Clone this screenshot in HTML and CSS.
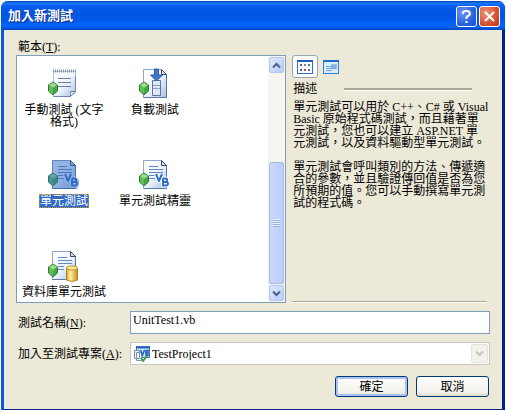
FILE: index.html
```html
<!DOCTYPE html>
<html lang="zh-Hant">
<head>
    <meta charset="UTF-8">
    <meta name="viewport" content="width=device-width, initial-scale=1.0">
    <title>加入新測試</title>
    <link rel="stylesheet" href="styles.css">
</head>
<body>
    <!-- Shared icon parts -->
    <svg class="defs" width="0" height="0" aria-hidden="true">
        <defs>
            <linearGradient id="paper" x1="0" y1="0" x2="1" y2="1">
                <stop offset="0" stop-color="#ffffff"/>
                <stop offset="0.5" stop-color="#f1f6fd"/>
                <stop offset="1" stop-color="#a9bfe3"/>
            </linearGradient>
            <linearGradient id="gold" x1="0" y1="0" x2="1" y2="0">
                <stop offset="0" stop-color="#d9a02c"/>
                <stop offset="0.35" stop-color="#fff0a8"/>
                <stop offset="1" stop-color="#c98f1e"/>
            </linearGradient>
            <g id="gem">
                <path d="M5 14l4.500 3v6L5 27l-4.500-4v-6z" fill="#45a447" stroke="#2b7b35"/>
                <path d="M5 14.500l4 2.500-4 3-4-3z" fill="#9bdc86"/>
                <path d="M1 17l4 3v6.500l-4-3.500z" fill="#62bd58"/>
            </g>
            <g id="page">
                <path d="M4.500 1.500H22l5.500 5v23h-23z" fill="url(#paper)" stroke="#8fa6cd"/>
                <path d="M27.500 6.500v23h-23" fill="none" stroke="#5c77a9"/>
                <path d="M22.500 1.500v5h5z" fill="#d5e0f2" stroke="#34486f"/>
            </g>
            <g id="lines" fill="none" stroke="#6188c6">
                <path d="M10 7.500h9M10 10.500h14M10 13.500h14M10 16.500h6M10 19.500h6"/>
            </g>
            <g id="vb" fill="none" stroke-linejoin="round">
                <path d="M17 15l3 7 3-7M24 19.500v7h3a2 1.800 0 0 0 0-3.600h-3m2.500 0a1.600 1.700 0 0 0 0-3.400H24" stroke="#ffffff" stroke-width="4"/>
                <path d="M17 15l3 7 3-7M24 19.500v7h3a2 1.800 0 0 0 0-3.600h-3m2.500 0a1.600 1.700 0 0 0 0-3.400H24" stroke="#2d6fc4" stroke-width="2"/>
            </g>
        </defs>
    </svg>

    <div class="window">
        <div class="title-bar">
            <h1>加入新測試</h1>
            <button class="caption-button help" aria-label="說明">
                <svg width="19" height="19" viewBox="0 0 19 19"><path d="M6 7V5.500Q6.500 4 9.500 4T13 6.500Q13 8 11 9T9.500 12M9.500 14v2" fill="none" stroke="#fff" stroke-width="2"/></svg>
            </button>
            <button class="caption-button close" aria-label="關閉">
                <svg width="19" height="19" viewBox="0 0 19 19"><path d="M5 5l9 9M14 5l-9 9" stroke="#fff" stroke-width="2"/></svg>
            </button>
        </div>

        <form class="content">
            <div class="templates">
                <section class="template-pane">
                    <h2 id="templatesLabel">範本(<u>T</u>):</h2>
                    <div class="list-box">
                        <div class="items" role="listbox" aria-labelledby="templatesLabel">
                            <button type="button" class="item" role="option">
                                <svg width="32" height="32" viewBox="0 0 32 32">
                                    <path d="M5.500 3.500h22v20l-5 5h-17z" fill="url(#paper)" stroke="#b3c1da"/>
                                    <path d="M27.500 8v16l-5 4.500h-17" fill="none" stroke="#6d87b5"/>
                                    <path d="M22.500 28.500v-5h5z" fill="#e6eefb" stroke="#6d87b5"/>
                                    <path d="M5 3h23" stroke="#8b94a8" stroke-width="3" stroke-dasharray="1 1"/>
                                    <path d="M10 10.500h13M10 14.500h13M10 18.500h13" stroke="#6a80a8"/>
                                    <use href="#gem"/>
                                </svg>
                                <span>手動測試 (文字格式)</span>
                            </button>
                            <button type="button" class="item" role="option">
                                <svg width="32" height="32" viewBox="0 0 32 32">
                                    <use href="#page"/>
                                    <path d="M13.500 12.500h8v15h-8z" fill="#dfe7f4" stroke="#60759d"/>
                                    <path d="M14 17.500h7M14 20.500h7" stroke="#8aa0c5"/>
                                    <path d="M15.500 1h4v6h4l-6 6-6-6h4z" fill="#3f76c8" stroke="#2a5aa8"/>
                                    <use href="#gem"/>
                                </svg>
                                <span>負載測試</span>
                            </button>
                            <button type="button" class="item selected" role="option" aria-selected="true">
                                <svg width="32" height="32" viewBox="0 0 32 32">
                                    <use href="#page"/>
                                    <use href="#lines"/>
                                    <use href="#vb"/>
                                    <use href="#gem"/>
                                    <path d="M4 1h18l6 5v12l3 3v5l-2 4H4v-4l-4-3v-6l4-3z" fill="#316ac5" fill-opacity="0.5"/>
                                </svg>
                                <span>單元測試</span>
                            </button>
                            <button type="button" class="item" role="option">
                                <svg width="32" height="32" viewBox="0 0 32 32">
                                    <use href="#page"/>
                                    <use href="#lines"/>
                                    <use href="#vb"/>
                                    <use href="#gem"/>
                                </svg>
                                <span>單元測試精靈</span>
                            </button>
                            <button type="button" class="item" role="option">
                                <svg width="32" height="32" viewBox="0 0 32 32">
                                    <use href="#page"/>
                                    <use href="#lines"/>
                                    <path d="M18.500 18v12q5.500 3 11 0V18z" fill="url(#gold)" stroke="#b58422"/>
                                    <ellipse cx="24" cy="18" rx="5.500" ry="2" fill="#ffe89a" stroke="#c4922b"/>
                                    <use href="#gem"/>
                                </svg>
                                <span>資料庫單元測試</span>
                            </button>
                        </div>
                        <div class="scrollbar">
                            <button type="button" class="arrow" aria-label="向上捲動">
                                <svg width="9" height="7" viewBox="0 0 9 7"><path d="M1 5.500L4.500 2 8 5.500" fill="none" stroke="#4d6185" stroke-width="2"/></svg>
                            </button>
                            <div class="track">
                                <div class="thumb"><i></i></div>
                            </div>
                            <button type="button" class="arrow" aria-label="向下捲動">
                                <svg width="9" height="7" viewBox="0 0 9 7"><path d="M1 1.500L4.500 5 8 1.500" fill="none" stroke="#4d6185" stroke-width="2"/></svg>
                            </button>
                        </div>
                    </div>
                </section>

                <section class="details">
                    <div class="views">
                        <button type="button" class="view active" aria-label="大圖示">
                            <svg width="16" height="14" viewBox="0 0 16 14">
                                <rect x="0.500" y="0.500" width="15" height="13" fill="#fff" stroke="#2f6fc4"/>
                                <path d="M0 1h16" stroke="#1f60bd" stroke-width="2"/>
                                <path d="M3 5h2M3 10h2" stroke="#4667a0" stroke-width="2"/>
                                <path d="M7 5h2" stroke="#7a8294" stroke-width="2"/>
                                <path d="M7 10h2" stroke="#c4473d" stroke-width="2"/>
                                <path d="M11 5h2" stroke="#369058" stroke-width="2"/>
                                <path d="M11 10h2" stroke="#596ba5" stroke-width="2"/>
                            </svg>
                        </button>
                        <button type="button" class="view" aria-label="小圖示">
                            <svg width="16" height="14" viewBox="0 0 16 14">
                                <rect x="0.500" y="0.500" width="15" height="13" fill="#d9ecff" stroke="#2f80d6"/>
                                <path d="M0 1h16" stroke="#1f6cc9" stroke-width="2"/>
                                <path d="M8 4h6v5H8z" fill="#93bdea"/>
                                <path d="M3 6.500h10M3 8.500h10M3 10.500h6" stroke="#74a6dc"/>
                            </svg>
                        </button>
                    </div>
                    <h2 class="details-title">描述</h2>
                    <p>
                        單元測試可以用於 C++、C# 或 Visual<br>
                        Basic 原始程式碼測試，而且藉著單<br>
                        元測試，您也可以建立 ASP.NET 單<br>
                        元測試，以及資料驅動型單元測試。
                    </p>
                    <p>
                        單元測試會呼叫類別的方法、傳遞適<br>
                        合的參數，並且驗證傳回值是否為您<br>
                        所預期的值。您可以手動撰寫單元測<br>
                        試的程式碼。
                    </p>
                </section>
            </div>

            <div class="field">
                <label for="testName">測試名稱(<u>N</u>):</label>
                <input type="text" id="testName" value="UnitTest1.vb">
            </div>
            <div class="field">
                <label for="testProject">加入至測試專案(<u>A</u>):</label>
                <div class="combo">
                    <svg width="16" height="16" viewBox="0 0 16 16">
                        <rect x="2.500" y="0.500" width="13" height="11" fill="#cfe3fa" stroke="#3b78c4"/>
                        <path d="M2 1.500h14" stroke="#2a66b8" stroke-width="2"/>
                        <path d="M0.500 4.500h5v8h-5zM2.500 6.500h5v8h-5z" fill="#f3f7fd" stroke="#7d93b5"/>
                        <path d="M6.500 4l2 5 2-5M12 4.500v5h2v-2.500h-2 2V4.500z" fill="none" stroke="#2463b5" stroke-width="1.500"/>
                        <path d="M7 12l2 3 4-5" fill="none" stroke="#41a044" stroke-width="2"/>
                    </svg>
                    <select id="testProject" disabled>
                        <option>TestProject1</option>
                    </select>
                    <span class="drop">
                        <svg width="9" height="7" viewBox="0 0 9 7"><path d="M1 1.500L4.500 5 8 1.500" fill="none" stroke="#c6c5ba" stroke-width="2"/></svg>
                    </span>
                </div>
            </div>

            <div class="actions">
                <button type="submit" class="push default">確定</button>
                <button type="button" class="push">取消</button>
            </div>
        </form>
    </div>
</body>
</html>
```

FILE: styles.css
```css
* {
    box-sizing: border-box;
}
body {
    margin: 0;
    padding: 1px;
    min-height: 100vh;
    display: flex;
    background: #f2fbff;
    color: #000;
    font-family: "Liberation Serif", "Noto Sans CJK TC", serif;
    font-size: 12px;
    line-height: 12px;
}
button, input, select {
    font: inherit;
    color: inherit;
    margin: 0;
    padding: 0;
}
svg {
    display: block;
    flex: none;
}
.defs {
    position: absolute;
}
h1, h2, p {
    margin: 0;
    font-size: 12px;
    font-weight: normal;
}
.window {
    flex: 1;
    display: flex;
    flex-direction: column;
    background: #ece9d8;
    border: solid;
    border-width: 0 3px 3px;
    border-color: #0a56e0 #06208c #06208c #0a56e0;
    border-radius: 7px 7px 0 0;
}

/* Title bar */
.title-bar {
    display: flex;
    align-items: center;
    gap: 2px;
    height: 29px;
    margin: 0 -3px;
    padding: 1px 5px 0 7px;
    border-radius: 7px 7px 0 0;
    background: linear-gradient(#0040b0, #1a78f8 8%, #0a5ff0 16%, #0054e3 40%, #0058ea 65%, #0366fd 85%, #0148c4);
}
.title-bar h1 {
    flex: 1;
    color: #fff;
    font-size: 13px;
    font-weight: bold;
    line-height: 16px;
    text-shadow: 1px 1px #0a2a80;
}
.caption-button {
    width: 21px;
    height: 21px;
    border: 1px solid #fff;
    border-radius: 3px;
    background: radial-gradient(circle at 30% 30%, #6a98f5, #2a62e0 60%, #1c50cc);
}
.caption-button.close {
    background: radial-gradient(circle at 30% 30%, #ee9478, #d8502e 60%, #b8381a);
}

/* Dialog body */
.content {
    flex: 1;
    display: flex;
    flex-direction: column;
    padding: 11px 12px 12px;
    gap: 8px;
}
.templates {
    flex: 1;
    display: flex;
    gap: 6px;
}
.template-pane {
    flex: 0 0 57%;
    display: flex;
    flex-direction: column;
    gap: 2px;
}
.template-pane h2 {
    padding-left: 2px;
}
.list-box {
    flex: 1;
    display: flex;
    background: #fff;
    border: 1px solid #7f9db9;
}
.items {
    flex: 1;
    display: grid;
    grid-template-columns: 92px 90px;
    grid-auto-rows: 91px;
    align-content: start;
    padding: 12px 0 0 1px;
    height: 246px;
    overflow: hidden;
}
.item {
    display: flex;
    flex-direction: column;
    align-items: center;
    gap: 3px;
    border: 0;
    background: none;
}
.item span {
    max-width: 86px;
    padding: 1px;
}
.item.selected span {
    background: #316ac5;
    color: #fff;
    outline: 1px dotted #ce953a;
    outline-offset: -1px;
}

.scrollbar {
    width: 17px;
    display: flex;
    flex-direction: column;
    padding: 1px;
    gap: 1px;
    background: #f6f5ef;
}
.arrow {
    height: 16px;
    display: flex;
    align-items: center;
    justify-content: center;
    border: 1px solid #b5c8f0;
    border-radius: 2px;
    background: linear-gradient(135deg, #dde7fd, #b9cdfa);
}
.track {
    flex: 1;
    display: flex;
    flex-direction: column;
    justify-content: flex-end;
}
.thumb {
    height: 58%;
    display: flex;
    align-items: center;
    justify-content: center;
    border: 1px solid #a5b9e5;
    border-radius: 2px;
    background: linear-gradient(90deg, #cbd9fd, #bccdfa);
}
.thumb i {
    width: 7px;
    height: 8px;
    background: repeating-linear-gradient(#eef4fe 0 1px, #94acdf 1px 2px);
}

/* Description */
.details {
    flex: 1;
    min-width: 0;
    margin: 14px 3px 1px 0;
    border-bottom: 1px solid #aca899;
    box-shadow: 0 1px #fff;
}
.views {
    display: flex;
}
.view {
    width: 26px;
    height: 23px;
    display: flex;
    align-items: center;
    justify-content: center;
    border: 1px solid transparent;
    border-radius: 3px;
    background: none;
}
.view.active {
    background: #fcfcfa;
    border-color: #98a5b2;
}
.details-title {
    display: flex;
    align-items: center;
    gap: 27px;
    margin: 5px 15px 6px 1px;
}
.details-title::after {
    content: "";
    flex: 1;
    height: 2px;
    background: #aca899;
    border-bottom: 1px solid #fff;
}
.details p {
    margin: 0 0 12px 1px;
    white-space: nowrap;
}

/* Fields */
.field {
    display: flex;
    align-items: center;
}
.field label {
    width: 114px;
    padding-left: 2px;
}
.field input, .combo {
    flex: 1;
    min-width: 0;
    height: 23px;
    border: 1px solid #7f9db9;
    background: #fff;
}
.field input {
    padding: 0 2px 4px;
}
.combo {
    display: flex;
    align-items: center;
    gap: 2px;
    padding: 1px 1px 1px 3px;
    border-color: #c9c7ba;
}
.combo select {
    flex: 1;
    height: 19px;
    border: 0;
    appearance: none;
    background: none;
    color: #000;
    opacity: 1;
}
.drop {
    width: 17px;
    height: 19px;
    display: flex;
    align-items: center;
    justify-content: center;
    border: 1px solid #e5e3d8;
    border-radius: 2px;
    background: #f3f2ec;
}

/* Buttons */
.actions {
    display: flex;
    justify-content: flex-end;
    gap: 8px;
    margin-top: 3px;
    padding-right: 1px;
}
.push {
    width: 73px;
    height: 21px;
    border: 1px solid #003c74;
    border-radius: 3px;
    background: linear-gradient(#fff, #f3f2ec 80%, #dcd8ca);
}
.push.default {
    box-shadow: inset 0 0 0 2px #a9c4f2;
}
```
